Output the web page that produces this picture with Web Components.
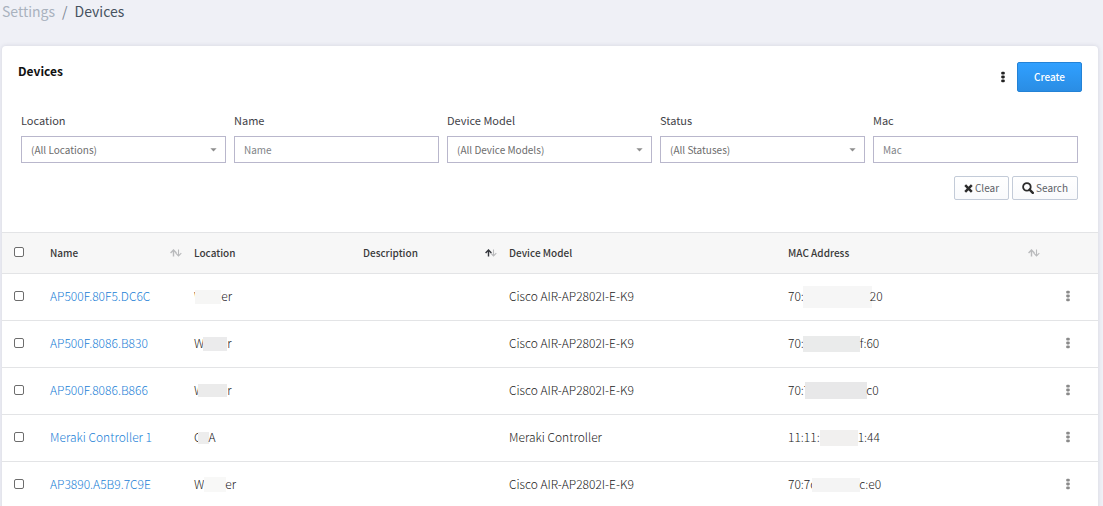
<!DOCTYPE html>
<html lang="en">
<head>
<meta charset="utf-8">
<meta name="viewport" content="width=device-width, initial-scale=1">
<title>Devices</title>
<style>
  html { background: #eff0f6; }
  body {
    margin: 0;
    font-family: "Noto Sans CJK SC", "Noto Sans", sans-serif;
    font-size: 11px;
    line-height: 20px;
    color: #4b4b4b;
    --line: #e3e4e6;
    --ink: #222;
    --link: #1a80d6;
  }
</style>
</head>
<body>
<devices-page></devices-page>

<script>
function define(name, html, setup) {
  const template = document.createElement('template');
  template.innerHTML = html;
  customElements.define(name, class extends HTMLElement {
    connectedCallback() {
      if (this.shadowRoot) return;
      this.attachShadow({ mode: 'open' }).append(template.content.cloneNode(true));
      if (setup) setup(this, this.shadowRoot);
    }
  });
}

/* Breadcrumb */
define('bread-crumb', `
<style>
  :host { display: block; font-size: 14px; line-height: 22px; color: #465260; }
  a { color: #a9b2be; text-decoration: none; }
  .sep { color: #7d8793; padding: 0 7px; }
</style>
<nav aria-label="Breadcrumb"><a href="#settings">Settings</a><span class="sep">/</span><span aria-current="page"><slot></slot></span></nav>`);

/* Three vertical dots */
define('kebab-menu', `
<style>
  :host { display: block; color: #8a8a8a; }
  button { display: flex; justify-content: center; width: 12px; height: 16px; padding: 2px 0; margin: 0 auto; border: 0; background: none; color: inherit; cursor: pointer; }
  svg { display: block; }
</style>
<button type="button" aria-label="More actions"><svg width="4" height="12" viewBox="0 0 4 12" fill="currentColor"><rect x=".2" y=".7" width="3.6" height="2.8" rx="1.1"/><rect x=".2" y="4.6" width="3.6" height="2.8" rx="1.1"/><rect x=".2" y="8.5" width="3.6" height="2.8" rx="1.1"/></svg></button>`);

/* Buttons */
define('ui-button', `
<style>
  :host { display: inline-block; }
  button {
    display: flex; align-items: center; gap: 2px; box-sizing: border-box; height: 24px; padding: 0 9px;
    border: 1px solid #c3cbd8; border-radius: 2px; background: linear-gradient(#fff, #f9fafc);
    font: inherit; font-size: 10px; line-height: 16px; color: #5c5f66; cursor: pointer; white-space: nowrap;
  }
  :host([primary]) button {
    height: 30px; padding: 0 16px; border-color: #2382d6; background: linear-gradient(#30a0ff, #2a8de4);
    color: #fff; font-weight: 500;
  }
</style>
<button type="button"><slot name="icon"></slot><slot></slot></button>`);

/* Text box or drop-down with its label */
define('filter-field', `
<style>
  :host { display: block; min-width: 0; }
  label { display: block; line-height: 18px; margin-bottom: 7px; color: #3f4248; }
  .box { display: grid; align-items: center; }
  .box > * { grid-area: 1 / 1; }
  input, select {
    box-sizing: border-box; width: 100%; height: 27px; padding: 0 9px; margin: 0;
    border: 1px solid #b9b7cc; border-radius: 0; background: #fff; appearance: none;
    font: inherit; font-size: 10px; line-height: 16px; color: #6d6d6d;
  }
  input::placeholder { color: #818488; opacity: 1; }
  svg { justify-self: end; margin-right: 9px; pointer-events: none; }
</style>
<label for="control"></label><div class="box"></div>`, (host, root) => {
  const label = host.getAttribute('label');
  const option = host.getAttribute('option');
  root.querySelector('label').textContent = label;
  root.querySelector('.box').innerHTML = option
    ? `<select id="control"><option>${option}</option></select><svg width="7" height="4" viewBox="0 0 7 4"><path d="M.4.3h6.2L3.5 3.6z" fill="#8e8e8e"/></svg>`
    : `<input id="control" type="text" placeholder="${label}">`;
});

/* White panel with heading, actions and content */
define('panel-card', `
<style>
  :host { display: block; background: #fff; border-radius: 4px 4px 0 0; box-shadow: 0 0 4px rgba(60, 65, 100, .16); }
  header { display: flex; align-items: flex-start; justify-content: space-between; padding: 16px 16px 18px; }
  h1 { margin: 0; font-size: 12px; line-height: 18px; font-weight: 700; color: #111; }
  .actions { display: flex; align-items: center; gap: 8px; }
</style>
<header><h1><slot name="title"></slot></h1><div class="actions"><slot name="actions"></slot></div></header>
<slot></slot>`);

define('device-filters', `
<style>
  :host { display: block; padding: 1px 20px 32px 19px; }
  .fields { display: grid; grid-template-columns: repeat(5, minmax(0, 1fr)); gap: 8px; }
  .buttons { display: flex; justify-content: flex-end; gap: 3px; margin-top: 13px; }
  svg { color: #2b2b2b; }
</style>
<div class="fields">
  <filter-field label="Location" option="(All Locations)"></filter-field>
  <filter-field label="Name"></filter-field>
  <filter-field label="Device Model" option="(All Device Models)"></filter-field>
  <filter-field label="Status" option="(All Statuses)"></filter-field>
  <filter-field label="Mac"></filter-field>
</div>
<div class="buttons">
  <ui-button><svg slot="icon" width="9" height="9" viewBox="0 0 9 9"><path d="M1.2 1.2l6.6 6.6M7.8 1.2L1.2 7.8" stroke="currentColor" stroke-width="2.5"/></svg>Clear</ui-button>
  <ui-button><svg slot="icon" width="12" height="12" viewBox="0 0 12 12" fill="none" stroke="currentColor"><circle cx="4.9" cy="4.9" r="3.8" stroke-width="1.8"/><path d="M7.6 7.6l3.2 3.2" stroke-width="2.4" stroke-linecap="round"/></svg>Search</ui-button>
</div>`);

/* Grey block hiding part of a value; attributes: w, h, pull (overlap with the text before), after (with the text behind) */
define('redacted-block', `
<style>
  :host { display: inline-block; vertical-align: middle; }
</style>`, host => {
  const n = key => Number(host.getAttribute(key) || 0);
  host.style.cssText = `width:${n('w')}px;height:${n('h')}px;background:${host.getAttribute('tone')};margin:-10px ${-n('after')}px -8px ${-n('pull')}px`;
});

/* Up and down arrows in a sortable heading */
define('sort-arrows', `
<style>
  :host { display: block; color: #b9babc; }
  :host([ascending]) .up { color: #33363c; }
  svg { display: block; }
</style>
<svg width="12" height="8" viewBox="0 0 12 8" fill="none" stroke="currentColor"><path class="up" stroke="currentColor" stroke-width="1.4" d="M3.5 7.4V1.2M.6 4L3.5 1l2.9 3"/><path stroke-width="1.1" d="M8.5.4v6.4M5.8 4.2L8.5 7l2.8-2.8"/></svg>`);

const block = (w, h, tone, pull = 0, after = 0) =>
  `<redacted-block w="${w}" h="${h}" tone="${tone}" pull="${pull}" after="${after}"></redacted-block>`;

const devices = [
  ['AP500F.80F5.DC6C', `W${block(26, 14, '#f6f6f5', 9)}er`, 'Cisco AIR-AP2802I-E-K9', `70:${block(69, 22, '#f6f6f6', 1, 2)}20`],
  ['AP500F.8086.B830', `W${block(24, 14, '#ebebec', 1)}r`, 'Cisco AIR-AP2802I-E-K9', `70:${block(57, 16, '#eaebeb', 1)}f:60`],
  ['AP500F.8086.B866', `W${block(29, 13, '#ebebeb', 6)}r`, 'Cisco AIR-AP2802I-E-K9', `70:7${block(62, 17, '#e8e8e9', 5, 1)}c0`],
  ['Meraki Controller 1', `C${block(11, 12, '#ededed', 4)}A`, 'Meraki Controller', `11:11:${block(38, 16, '#f1f0ef')}1:44`],
  ['AP3890.A5B9.7C9E', `W${block(22, 15, '#f8f8f7', 0, 1)}er`, 'Cisco AIR-AP2802I-E-K9', `70:7c${block(48, 14, '#f4f4f4', 4, 1)}c:e0`]
];

define('device-table', `
<style>
  :host { display: block; }
  table { width: 100%; table-layout: fixed; border-collapse: collapse; }
  .pick { width: 40px; } .name { width: 144px; } .place { width: 169px; } .about { width: 146px; }
  .mac { width: 264px; } .more { width: 54px; }
  th, td { box-sizing: border-box; padding: 0 4px 0 8px; text-align: left; vertical-align: middle; white-space: nowrap; border-top: 1px solid var(--line); }
  th { height: 41px; background: #f7f7f7; font-size: 10px; font-weight: 500; color: #3a3a3a; }
  td { height: 47px; padding-bottom: 2px; font-size: 12px; font-weight: 300; color: var(--ink); }
  th > div { display: flex; align-items: center; justify-content: space-between; }
  th:first-child, td:first-child { padding: 0 12px 2px; }
  td:last-child { padding: 0 12px 2px 6px; }
  input { display: block; width: 10px; height: 10px; margin: 0; border: 1px solid #6d6d6d; border-radius: 2px; background: #fff; appearance: none; box-sizing: border-box; }
  input:checked { background: var(--link); }
  a { color: var(--link); text-decoration: none; }
</style>
<table>
  <colgroup><col class="pick"><col class="name"><col class="place"><col class="about"><col><col class="mac"><col class="more"></colgroup>
  <thead><tr>
    <th><input type="checkbox" aria-label="Select all devices"></th>
    <th><div>Name<sort-arrows></sort-arrows></div></th>
    <th>Location</th>
    <th><div>Description<sort-arrows ascending></sort-arrows></div></th>
    <th>Device Model</th>
    <th><div>MAC Address<sort-arrows></sort-arrows></div></th>
    <th></th>
  </tr></thead>
  <tbody></tbody>
</table>`, (host, root) => {
  root.querySelector('tbody').innerHTML = devices.map(([name, place, model, mac]) => `<tr>
    <td><input type="checkbox" aria-label="Select ${name}"></td>
    <td><a href="#device">${name}</a></td><td>${place}</td><td></td><td>${model}</td><td>${mac}</td>
    <td><kebab-menu></kebab-menu></td></tr>`).join('');
});

define('devices-page', `
<style>
  :host { display: block; padding: 0 5px 0 2px; }
  panel-card { margin-top: 24px; }
  .dark { color: #222; }
</style>
<bread-crumb>Devices</bread-crumb>
<main><panel-card>
  <span slot="title">Devices</span>
  <kebab-menu slot="actions" class="dark"></kebab-menu>
  <ui-button slot="actions" primary>Create</ui-button>
  <device-filters></device-filters>
  <device-table></device-table>
</panel-card></main>`);
</script>
</body>
</html>
